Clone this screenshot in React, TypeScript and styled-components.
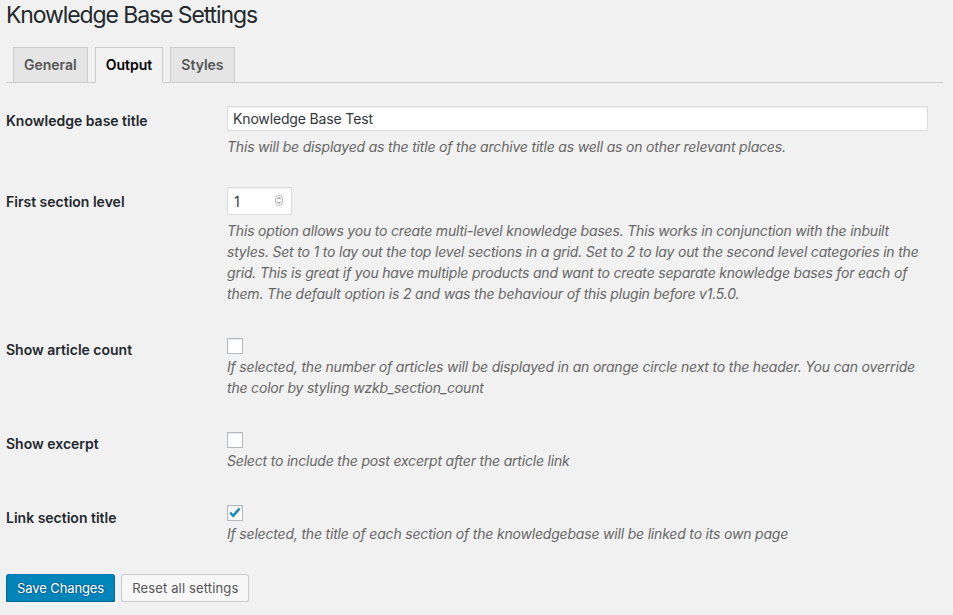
import React from "react";
import styled, { createGlobalStyle, css } from "styled-components";

const GlobalStyle = createGlobalStyle`
  html, body { margin: 0; padding: 0; }
  body {
    background: #f1f1f1;
    color: #23282d;
    font-family: Inter, "Noto Sans", "Liberation Sans", sans-serif;
    font-size: 14px;
    line-height: 1.4;
  }
`;

const Wrap = styled.div`
  width: 937px;
  margin-left: 6px;
`;

const Title = styled.h1`
  margin: 0;
  padding: 0;
  font-size: 23px;
  font-weight: 400;
  line-height: 30px;
  letter-spacing: -1.1px;
  color: #23282d;
`;

const TabBar = styled.nav`
  display: flex;
  margin-top: 17px;
  border-bottom: 1px solid #ccc;
  height: 35px;
`;

const Tab = styled.a<{ $active?: boolean }>`
  display: block;
  box-sizing: border-box;
  height: 36px;
  margin-left: 7px;
  padding: 5px 10px;
  border: 1px solid #ccc;
  font-size: 14px;
  font-weight: 600;
  line-height: 24px;
  text-decoration: none;
  white-space: nowrap;
  color: #555;
  background: #e5e5e5;
  cursor: pointer;
  ${(p) =>
    p.$active &&
    css`
      color: #000;
      background: #f1f1f1;
      border-bottom-color: #f1f1f1;
    `}
`;

const Form = styled.div`
  display: grid;
  grid-template-columns: 221px 701px;
  margin-top: 8px;
`;

const Label = styled.div<{ $top?: number }>`
  padding: ${(p) => p.$top ?? 21}px 0 0 0;
  font-size: 14px;
  font-weight: 600;
  line-height: 18px;
  color: #23282d;
`;

const Field = styled.div`
  padding: 15px 0;
`;

const TextInput = styled.input`
  display: block;
  box-sizing: border-box;
  width: 701px;
  height: 25px;
  margin: 0;
  padding: 0 5px;
  border: 1px solid #ddd;
  box-shadow: inset 0 1px 2px rgba(0, 0, 0, 0.07);
  background: #fff;
  color: #32373c;
  font-family: inherit;
  font-size: 14px;
  letter-spacing: -0.15px;
  outline: none;
`;

const NumberWrap = styled.div`
  position: relative;
  width: 65px;
  height: 28px;
`;

const NumberInput = styled.input`
  display: block;
  box-sizing: border-box;
  width: 65px;
  height: 28px;
  margin: 0;
  padding: 0 6px;
  border: 1px solid #ddd;
  box-shadow: inset 0 1px 2px rgba(0, 0, 0, 0.07);
  background: #fff;
  color: #32373c;
  font-family: inherit;
  font-size: 14px;
  outline: none;
  -moz-appearance: textfield;
  &::-webkit-inner-spin-button,
  &::-webkit-outer-spin-button {
    -webkit-appearance: none;
    margin: 0;
  }
`;

const Spinner = styled.svg`
  position: absolute;
  left: 48px;
  top: 8px;
`;

const CheckWrap = styled.div`
  position: relative;
  width: 16px;
  height: 16px;
  margin-top: 4px;
`;

const CheckInput = styled.input`
  appearance: none;
  -webkit-appearance: none;
  display: block;
  box-sizing: border-box;
  width: 16px;
  height: 16px;
  margin: 0;
  border: 1px solid #b4b9be;
  background: #fff;
  box-shadow: inset 0 1px 2px rgba(0, 0, 0, 0.1);
  outline: none;
`;

const CheckMark = styled.svg`
  position: absolute;
  left: 0;
  top: 0;
  pointer-events: none;
`;

const Desc = styled.p<{ $gap?: number }>`
  margin: ${(p) => p.$gap ?? 5}px 0 0 0;
  font-size: 14px;
  font-style: italic;
  line-height: 21px;
  letter-spacing: -0.19px;
  color: #666;
  white-space: nowrap;
`;

const Actions = styled.div`
  display: flex;
  gap: 6px;
  margin-top: 15px;
`;

const Button = styled.button<{ $primary?: boolean }>`
  box-sizing: border-box;
  height: 28px;
  margin: 0;
  padding: 0 10px 1px;
  border: 1px solid #ccc;
  border-radius: 3px;
  font-family: inherit;
  font-size: 13px;
  line-height: 26px;
  letter-spacing: 0.15px;
  white-space: nowrap;
  cursor: pointer;
  color: #555;
  background: #f7f7f7;
  box-shadow: 0 1px 0 #ccc;
  ${(p) =>
    p.$primary &&
    css`
      letter-spacing: -0.1px;
      color: #fff;
      background: #0085ba;
      border-color: #0073aa #006799 #006799;
      box-shadow: 0 1px 0 #006799;
      text-shadow: 0 -1px 1px #006799, 1px 0 1px #006799, 0 1px 1px #006799,
        -1px 0 1px #006799;
    `}
`;

const Checkbox: React.FC<{ checked?: boolean }> = ({ checked }) => (
  <CheckWrap>
    <CheckInput type="checkbox" defaultChecked={checked} />
    {checked && (
      <CheckMark width="16" height="16" viewBox="0 0 16 16">
        <path
          d="M3.2 7.6 L6.3 10.9 L12.6 3.4"
          fill="none"
          stroke="#1e8cbe"
          strokeWidth="2.6"
          strokeLinecap="butt"
          strokeLinejoin="miter"
        />
      </CheckMark>
    )}
  </CheckWrap>
);

export default function App() {
  return (
    <>
      <GlobalStyle />
      <Wrap>
        <Title>Knowledge Base Settings</Title>
        <TabBar>
          <Tab>General</Tab>
          <Tab $active>Output</Tab>
          <Tab>Styles</Tab>
        </TabBar>
        <Form>
          <Label>Knowledge base title</Label>
          <Field>
            <TextInput type="text" defaultValue="Knowledge Base Test" />
            <Desc>
              This will be displayed as the title of the archive title as well as on other relevant places.
            </Desc>
          </Field>

          <Label>First section level</Label>
          <Field>
            <NumberWrap>
              <NumberInput type="number" defaultValue={1} />
              <Spinner width="8" height="11" viewBox="0 0 8 11">
                <rect x="0.5" y="0.5" width="7" height="10" rx="3.5" fill="#fff" stroke="#b8b8b8" />
                <path d="M2.3 4.3 L4 2.6 L5.7 4.3" fill="none" stroke="#555" strokeWidth="0.9" />
                <path d="M2.3 6.7 L4 8.4 L5.7 6.7" fill="none" stroke="#555" strokeWidth="0.9" />
              </Spinner>
            </NumberWrap>
            <Desc>
              This option allows you to create multi-level knowledge bases. This works in conjunction with the inbuilt
              <br />
              styles. Set to 1 to lay out the top level sections in a grid. Set to 2 to lay out the second level categories in the
              <br />
              grid. This is great if you have multiple products and want to create separate knowledge bases for each of
              <br />
              them. The default option is 2 and was the behaviour of this plugin before v1.5.0.
            </Desc>
          </Field>

          <Label $top={22}>Show article count</Label>
          <Field>
            <Checkbox />
            <Desc $gap={2}>
              If selected, the number of articles will be displayed in an orange circle next to the header. You can override
              <br />
              the color by styling wzkb_section_count
            </Desc>
          </Field>

          <Label $top={22}>Show excerpt</Label>
          <Field>
            <Checkbox />
            <Desc $gap={2}>Select to include the post excerpt after the article link</Desc>
          </Field>

          <Label $top={23}>Link section title</Label>
          <Field>
            <Checkbox checked />
            <Desc $gap={2}>
              If selected, the title of each section of the knowledgebase will be linked to its own page
            </Desc>
          </Field>
        </Form>
        <Actions>
          <Button $primary>Save Changes</Button>
          <Button>Reset all settings</Button>
        </Actions>
      </Wrap>
    </>
  );
}
